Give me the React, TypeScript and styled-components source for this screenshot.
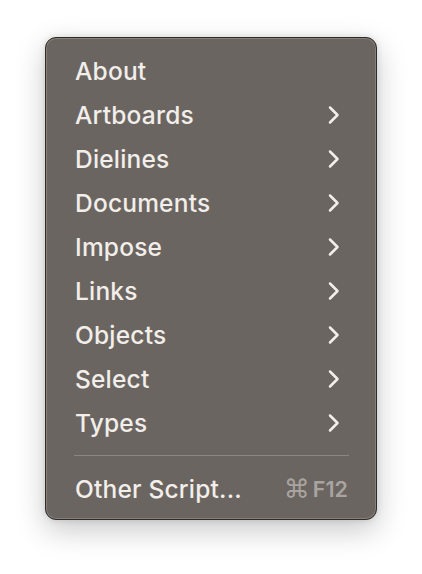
import React from 'react';
import styled, { createGlobalStyle } from 'styled-components';

const ITEMS = [
  { label: 'About', submenu: false },
  { label: 'Artboards', submenu: true },
  { label: 'Dielines', submenu: true },
  { label: 'Documents', submenu: true },
  { label: 'Impose', submenu: true },
  { label: 'Links', submenu: true },
  { label: 'Objects', submenu: true },
  { label: 'Select', submenu: true },
  { label: 'Types', submenu: true },
];

const GlobalStyle = createGlobalStyle`
  html, body {
    margin: 0;
    padding: 0;
    background: #ffffff;
  }
  body {
    font-family: Inter, 'Liberation Sans', Arial, sans-serif;
  }
`;

const Chevron = () => (
  <ChevronIcon width="14" height="20" viewBox="0 0 14 20" fill="none">
    <path
      d="M3 2.5 L10.5 10 L3 17.5"
      stroke="#f2eeea"
      strokeWidth="2.5"
      strokeLinecap="round"
      strokeLinejoin="round"
    />
  </ChevronIcon>
);

export default function App() {
  return (
    <Page>
      <GlobalStyle />
      <Menu>
        {ITEMS.map((item) => (
          <Row key={item.label}>
            <Label>{item.label}</Label>
            {item.submenu && <Chevron />}
          </Row>
        ))}
        <Separator />
        <Row>
          <Label>Other Script...</Label>
          <Shortcut>
            <Cmd>⌘</Cmd>F12
          </Shortcut>
        </Row>
      </Menu>
    </Page>
  );
}

const Page = styled.div`
  width: 422px;
  height: 574px;
  padding: 37px 0 0 45px;
  box-sizing: border-box;
`;

const Menu = styled.div`
  width: 332px;
  box-sizing: border-box;
  background: #6b6561;
  border: 1px solid #2e2b29;
  box-shadow: inset 0 0 0 1px #86807b, 0 10px 30px rgba(0, 0, 0, 0.22),
    0 0 6px rgba(0, 0, 0, 0.12);
  border-radius: 11px;
  padding: 11px 27px 8px 28px;
  display: flex;
  flex-direction: column;
`;

const Row = styled.div`
  height: 44px;
  display: flex;
  align-items: center;
  justify-content: space-between;
  padding-left: 1px;
  padding-right: 1px;
`;

const Label = styled.span`
  font-family: Inter, 'Liberation Sans', Arial, sans-serif;
  font-size: 24.5px;
  font-weight: 450;
  color: #f2eeea;
  letter-spacing: 0.2px;
`;

const ChevronIcon = styled.svg`
  margin-right: 7px;
`;

const Separator = styled.div`
  height: 1px;
  background: #8c8681;
  margin: 10px 0 11px;
`;

const Shortcut = styled.span`
  font-family: Inter, 'Liberation Sans', Arial, sans-serif;
  font-size: 21.5px;
  font-weight: 600;
  color: #a9a4a0;
  display: flex;
  align-items: center;
`;

const Cmd = styled.span`
  font-family: 'DejaVu Sans', sans-serif;
  font-size: 26px;
  font-weight: 400;
  margin-right: 3px;
`;
